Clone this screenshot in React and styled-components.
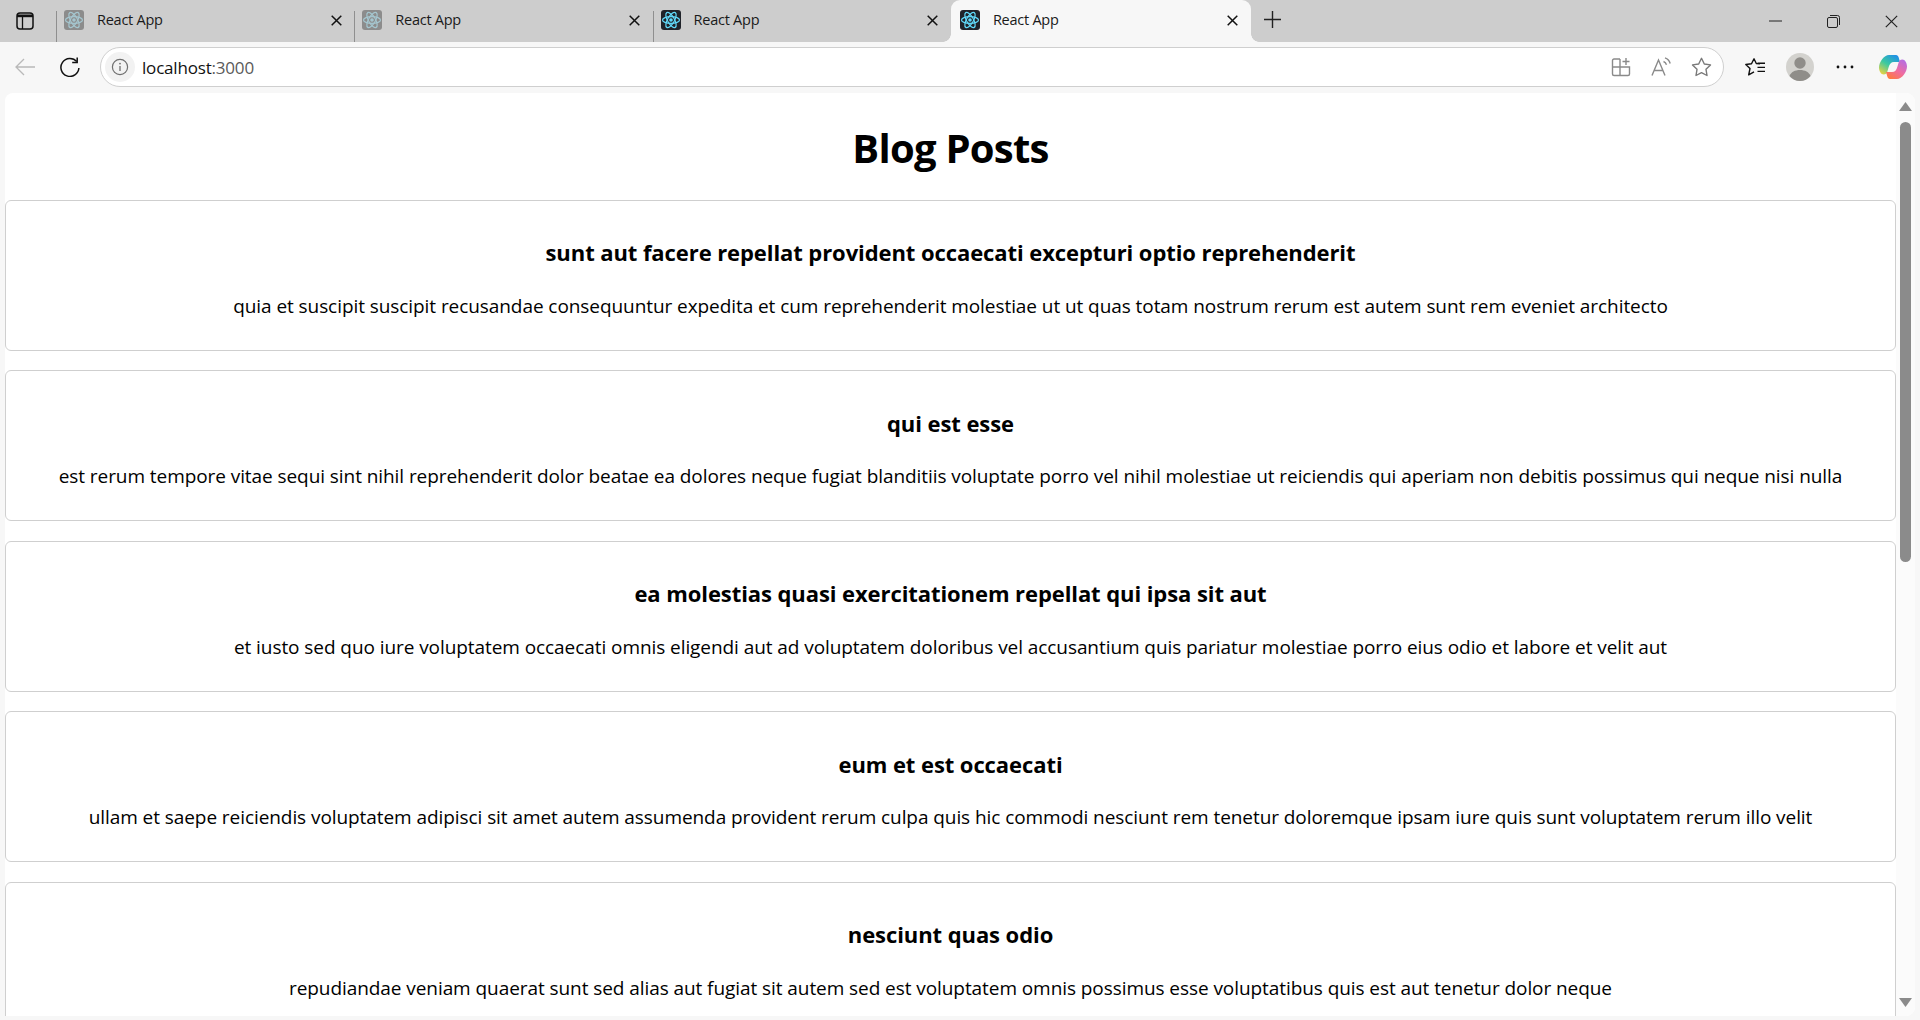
import React from "react";
import styled, { createGlobalStyle } from "styled-components";

const GlobalStyle = createGlobalStyle`
  html, body {
    margin: 0;
    height: 100%;
    overflow: hidden;
    background: #f7f7f7;
  }

  #root {
    height: 100%;
  }
`;

const uiFont = `"Open Sans", "Noto Sans", "Liberation Sans", sans-serif`;

const Browser = styled.div`
  display: flex;
  flex-direction: column;
  height: 1020px;
  font-family: ${uiFont};
  color: #000;
`;

const TabStrip = styled.div`
  display: flex;
  align-items: stretch;
  height: 42px;
  background: #cdcdcd;
`;

const SideToggle = styled.div`
  display: flex;
  align-items: center;
  justify-content: center;
  width: 50px;
  margin-right: 6px;
`;

const Tab = styled.div`
  position: relative;
  display: flex;
  align-items: center;
  box-sizing: border-box;
  width: ${(p) => (p.$active ? "300px" : "298.3px")};
  height: 42px;
  padding: 0 12.5px 2px ${(p) => (p.$active ? "9px" : "8px")};
  background: ${(p) => (p.$active ? "#f7f7f7" : "transparent")};
  border-radius: ${(p) => (p.$active ? "9px 9px 0 0" : "0")};

  &::before {
    content: "";
    display: ${(p) => (p.$active ? "none" : "block")};
    position: absolute;
    left: 0;
    top: 11px;
    height: 31px;
    width: 1px;
    background: #8f8f8f;
  }
`;

const TabFlare = styled.span`
  position: absolute;
  bottom: 0;
  ${(p) => (p.$side === "left" ? "left: -8px;" : "right: -8px;")}
  width: 8px;
  height: 8px;
  background: radial-gradient(
    circle at ${(p) => (p.$side === "left" ? "0 0" : "100% 0")},
    #cdcdcd 7.5px,
    #f7f7f7 8px
  );
`;

const TabTitle = styled.span`
  flex: 1;
  margin-left: 13px;
  margin-bottom: 2px;
  font-size: 14.5px;
  letter-spacing: -0.25px;
  color: #1a1a1a;
`;

const NewTab = styled.div`
  display: flex;
  align-items: center;
  justify-content: center;
  width: 42px;
  margin-left: 1px;
  padding-bottom: 3px;
`;

const WindowControls = styled.div`
  display: flex;
  margin-left: auto;
`;

const WindowButton = styled.div`
  display: flex;
  align-items: center;
  justify-content: center;
  width: 58px;
`;

const Toolbar = styled.div`
  display: flex;
  align-items: center;
  box-sizing: border-box;
  height: 51px;
  padding: 0 5px 1px 3px;
  background: #f7f7f7;
`;

const ToolButton = styled.div`
  display: flex;
  align-items: center;
  justify-content: center;
  flex: none;
  width: ${(p) => p.$width || 44}px;
  height: 40px;
  margin-left: ${(p) => p.$gap || 0}px;
`;

const AddressBar = styled.div`
  display: flex;
  align-items: center;
  flex: 1;
  box-sizing: border-box;
  height: 40px;
  margin: 0 9px 0 8px;
  padding: 0 2px 0 4px;
  background: #fff;
  border: 1px solid #cfcfcf;
  border-radius: 20px;
`;

const SiteInfo = styled.div`
  display: flex;
  align-items: center;
  justify-content: center;
  width: 30px;
  height: 30px;
  border-radius: 50%;
  background: #f2f2f2;
`;

const Url = styled.div`
  flex: 1;
  margin-left: 7px;
  font-size: 17px;
  letter-spacing: -0.19px;
  color: #111;

  span {
    color: #5a5a5a;
  }
`;

const AddressIcon = styled.div`
  display: flex;
  align-items: center;
  justify-content: center;
  width: 40px;
`;

const Viewport = styled.div`
  display: flex;
  flex: 1;
  min-height: 0;
  margin: 0 5px 4px 5px;
  background: #fff;
  border-radius: 8px 9px 9px 0;
  overflow: hidden;
`;

const Page = styled.main`
  flex: 1;
  min-width: 0;
  overflow: hidden;
  text-align: center;
`;

const Heading = styled.h1`
  margin: 28px 0 25.8px;
  font-size: 40px;
  line-height: 53px;
  font-weight: 700;
  letter-spacing: -0.75px;
`;

const PostCard = styled.article`
  display: flow-root;
  box-sizing: border-box;
  height: 151px;
  margin-bottom: 19.5px;
  padding: 12px 0;
  border: 1px solid #cfcfcf;
  border-radius: 6px;
`;

const PostTitle = styled.h3`
  margin: 24.4px 0;
  font-size: 22px;
  line-height: 31px;
  font-weight: 700;
  letter-spacing: -0.08px;
`;

const PostBody = styled.p`
  margin: 0;
  font-size: 19px;
  line-height: 26.6px;
  letter-spacing: -0.07px;
  white-space: nowrap;
`;

const ScrollBar = styled.div`
  display: flex;
  flex-direction: column;
  align-items: center;
  flex: none;
  width: 19px;
  background: #fbfbfb;
  padding-top: 9px;
  padding-bottom: 9px;
`;

const ScrollThumb = styled.div`
  width: 11px;
  height: 440px;
  margin-top: 11px;
  border-radius: 6px;
  background: #8b8b8b;
`;

const ScrollArrow = styled.svg`
  flex: none;
  margin-top: ${(p) => (p.$down ? "auto" : "0")};
`;

const ReactIcon = ({ faded }) => {
  const bg = faded ? "#8c8c8c" : "#20232a";
  const fg = faded ? "#a5c6cf" : "#61dafb";
  return (
    <svg width="20" height="20" viewBox="0 0 20 20">
      <rect width="20" height="20" rx="3" fill={bg} />
      <g fill="none" stroke={fg} strokeWidth="1.2">
        <ellipse cx="10" cy="10" rx="8.5" ry="3.4" />
        <ellipse cx="10" cy="10" rx="8.5" ry="3.4" transform="rotate(60 10 10)" />
        <ellipse cx="10" cy="10" rx="8.5" ry="3.4" transform="rotate(120 10 10)" />
      </g>
      <circle cx="10" cy="10" r="1.8" fill={fg} />
    </svg>
  );
};

const CloseIcon = ({ size = 11, stroke = "#111", width = 1.5 }) => (
  <svg width={size} height={size} viewBox="0 0 11 11">
    <path d="M.7.7l9.6 9.6M10.3.7L.7 10.3" stroke={stroke} strokeWidth={width} fill="none" />
  </svg>
);

const posts = [
  {
    title: "sunt aut facere repellat provident occaecati excepturi optio reprehenderit",
    body: "quia et suscipit suscipit recusandae consequuntur expedita et cum reprehenderit molestiae ut ut quas totam nostrum rerum est autem sunt rem eveniet architecto",
  },
  {
    title: "qui est esse",
    body: "est rerum tempore vitae sequi sint nihil reprehenderit dolor beatae ea dolores neque fugiat blanditiis voluptate porro vel nihil molestiae ut reiciendis qui aperiam non debitis possimus qui neque nisi nulla",
  },
  {
    title: "ea molestias quasi exercitationem repellat qui ipsa sit aut",
    body: "et iusto sed quo iure voluptatem occaecati omnis eligendi aut ad voluptatem doloribus vel accusantium quis pariatur molestiae porro eius odio et labore et velit aut",
  },
  {
    title: "eum et est occaecati",
    body: "ullam et saepe reiciendis voluptatem adipisci sit amet autem assumenda provident rerum culpa quis hic commodi nesciunt rem tenetur doloremque ipsam iure quis sunt voluptatem rerum illo velit",
  },
  {
    title: "nesciunt quas odio",
    body: "repudiandae veniam quaerat sunt sed alias aut fugiat sit autem sed est voluptatem omnis possimus esse voluptatibus quis est aut tenetur dolor neque",
  },
];

const tabs = [{ faded: true }, { faded: true }, { faded: false }, { faded: false, active: true }];

function App() {
  return (
    <Browser>
      <GlobalStyle />
      <TabStrip>
        <SideToggle>
          <svg width="18" height="18" viewBox="0 0 18 18" fill="none">
            <rect x="1" y="1" width="16" height="16" rx="3" stroke="#111" strokeWidth="1.5" />
            <path d="M1 2.5h16v2.7H1z" fill="#111" />
            <path d="M6.5 5v12" stroke="#111" strokeWidth="1.3" />
          </svg>
        </SideToggle>
        {tabs.map((tab, i) => (
          <Tab key={i} $active={tab.active}>
            {tab.active && <TabFlare $side="left" />}
            {tab.active && <TabFlare $side="right" />}
            <ReactIcon faded={tab.faded} />
            <TabTitle>React App</TabTitle>
            <CloseIcon />
          </Tab>
        ))}
        <NewTab>
          <svg width="17" height="17" viewBox="0 0 17 17">
            <path d="M8.5 0v17M0 8.5h17" stroke="#222" strokeWidth="1.4" />
          </svg>
        </NewTab>
        <WindowControls>
          <WindowButton>
            <svg width="13" height="2" viewBox="0 0 13 2">
              <path d="M0 1h13" stroke="#222" strokeWidth="1" />
            </svg>
          </WindowButton>
          <WindowButton>
            <svg width="13" height="13" viewBox="0 0 13 13" fill="none">
              <rect x=".5" y="2.5" width="10" height="10" rx="1.5" stroke="#222" />
              <path d="M3 .5h7.5a2 2 0 012 2V10" stroke="#222" />
            </svg>
          </WindowButton>
          <WindowButton>
            <CloseIcon size={13} stroke="#222" width={1} />
          </WindowButton>
        </WindowControls>
      </TabStrip>

      <Toolbar>
        <ToolButton>
          <svg width="20" height="18" viewBox="0 0 20 18" fill="none">
            <path d="M20 9H1M9 1L1 9l8 8" stroke="#b9b9b9" strokeWidth="1.3" />
          </svg>
        </ToolButton>
        <ToolButton $gap={1}>
          <svg width="20" height="20" viewBox="0 0 20 20" fill="none">
            <path d="M16.8 4.6A9 9 0 1018.9 11" stroke="#111" strokeWidth="1.5" />
            <path d="M17.2 .4v5h-5" stroke="#111" strokeWidth="1.5" />
          </svg>
        </ToolButton>
        <AddressBar>
          <SiteInfo>
            <svg width="18" height="18" viewBox="0 0 18 18" fill="none">
              <circle cx="9" cy="9" r="7.6" stroke="#6f6f6f" strokeWidth="1.2" />
              <path d="M9 8v5" stroke="#6f6f6f" strokeWidth="1.3" />
              <circle cx="9" cy="5.6" r=".9" fill="#6f6f6f" />
            </svg>
          </SiteInfo>
          <Url>
            localhost<span>:3000</span>
          </Url>
          <AddressIcon>
            <svg width="20" height="20" viewBox="0 0 20 20" fill="none" stroke="#8a8a8a" strokeWidth="1.4">
              <path d="M9 2H3a1.5 1.5 0 00-1.5 1.5V17A1.5 1.5 0 003 18.500h14a1.500 1.500 0 001.500-1.500V10H1.500M9 2v16.500" />
              <path d="M15 1v7M11.500 4.500h7" />
            </svg>
          </AddressIcon>
          <AddressIcon>
            <svg width="20" height="20" viewBox="0 0 20 20" fill="none" stroke="#8a8a8a" strokeWidth="1.4">
              <path d="M1 18.500L7.500 3l6.500 15.500M3.200 13.500h8.600" />
              <path d="M12.500 4.500c1.500.6 2.500 1.700 3 3.300M14 .8c2.800 1 4.500 3 5.200 5.700" />
            </svg>
          </AddressIcon>
          <AddressIcon>
            <svg width="21" height="20" viewBox="0 0 21 20" fill="none">
              <path
                d="M10.500 1.300l2.800 5.700 6.200.9-4.500 4.400 1 6.200-5.500-2.900L5 18.500l1-6.200L1.500 7.900l6.200-.9z"
                stroke="#7a7a7a"
                strokeWidth="1.4"
                strokeLinejoin="round"
              />
            </svg>
          </AddressIcon>
        </AddressBar>
        <ToolButton>
          <svg width="20" height="18" viewBox="0 0 20 18" fill="none" stroke="#111" strokeWidth="1.4">
            <path d="M15 5.800 11.300 5.500 9 .8 6.500 5.800.8 6.500 5 10.500 3.700 16.800 9 13.800" strokeLinejoin="round" />
            <path d="M12.500 5.300H20M12.500 9.400H20M12.500 13.400H20" />
          </svg>
        </ToolButton>
        <ToolButton $gap={1}>
          <svg width="28" height="28" viewBox="0 0 28 28">
            <circle cx="14" cy="14" r="14" fill="#d3d2ce" />
            <circle cx="14" cy="10" r="5.700" fill="#8f8d89" />
            <path d="M3.500 23c1.500-4 5.500-6 10.500-6s9 2 10.500 6A14 14 0 0114 28a14 14 0 01-10.500-5z" fill="#8f8d89" />
          </svg>
        </ToolButton>
        <ToolButton $gap={1}>
          <svg width="18" height="4" viewBox="0 0 18 4" fill="#111">
            <circle cx="2" cy="2" r="1.400" />
            <circle cx="9" cy="2" r="1.400" />
            <circle cx="16" cy="2" r="1.400" />
          </svg>
        </ToolButton>
        <ToolButton $gap={4}>
          <svg width="28" height="28" viewBox="0 0 28 28">
            <defs>
              <linearGradient id="copilotLeft" x1="0.8" y1="0" x2="0.1" y2="1">
                <stop offset="0" stopColor="#1f8fe8" />
                <stop offset="0.5" stopColor="#3bc9a0" />
                <stop offset="1" stopColor="#f5d33c" />
              </linearGradient>
              <linearGradient id="copilotRight" x1="0.9" y1="0" x2="0.2" y2="1">
                <stop offset="0" stopColor="#b06ee8" />
                <stop offset="0.55" stopColor="#f06ca0" />
                <stop offset="1" stopColor="#ff7a3c" />
              </linearGradient>
            </defs>
            <path d="M10 2h7c1.500 0 2.200 1 2.700 2.500L21 9h-6c-3 0-4.500 2-5.300 5l-1.500 5c-.5 1.500-1.500 2.500-3.500 2.500C2 21.500 0 18 0 14.500 0 9 5 2 10 2z" fill="url(#copilotLeft)" />
            <path d="M18 26h-7c-1.500 0-2.200-1-2.700-2.500L7 19h6c3 0 4.500-2 5.300-5l1.500-5C20.300 7.500 21.300 6.500 23.300 6.500 26 6.500 28 10 28 13.500 28 19 23 26 18 26z" fill="url(#copilotRight)" />
          </svg>
        </ToolButton>
      </Toolbar>

      <Viewport>
        <Page>
          <Heading>Blog Posts</Heading>
          {posts.map((post) => (
            <PostCard key={post.title}>
              <PostTitle>{post.title}</PostTitle>
              <PostBody>{post.body}</PostBody>
            </PostCard>
          ))}
        </Page>
        <ScrollBar>
          <ScrollArrow width="13" height="9" viewBox="0 0 13 9">
            <path d="M6.500 0L13 9H0z" fill="#8b8b8b" />
          </ScrollArrow>
          <ScrollThumb />
          <ScrollArrow $down width="13" height="9" viewBox="0 0 13 9">
            <path d="M6.500 9L0 0h13z" fill="#8b8b8b" />
          </ScrollArrow>
        </ScrollBar>
      </Viewport>
    </Browser>
  );
}

export default App;
